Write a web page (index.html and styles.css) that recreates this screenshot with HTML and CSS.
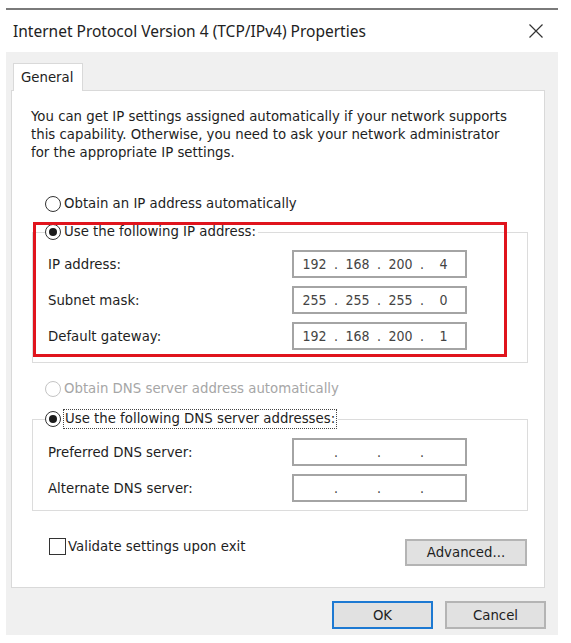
FILE: index.html
```html
<!DOCTYPE html>
<html>
  <head>
    <title>Internet Protocol Version 4 (TCP/IPv4) Properties</title>
    <link rel="stylesheet" href="styles.css">
  </head>
  <body>
    <div class="peek"></div>
    <div class="window">
      <div class="titlebar">
        <span class="title">Internet Protocol Version 4 (TCP/IPv4) Properties</span>
        <svg class="close" width="16" height="16" viewBox="0 0 16 16">
          <path d="M1.5 1.5L14.5 14.5M14.5 1.5L1.5 14.5"/>
        </svg>
      </div>

      <div class="frame">
        <div class="tabs">
          <div class="tab">General</div>
        </div>

        <div class="panel">
          <p class="intro">You can get IP settings assigned automatically if your network supports<br>this capability. Otherwise, you need to ask your network administrator<br>for the appropriate IP settings.</p>

          <div class="choice first"><span class="radio"></span>Obtain an IP address automatically</div>

          <fieldset class="group ip-group">
            <legend class="choice"><span class="radio on"></span>Use the following IP address:</legend>
            <div class="field">
              <span class="label">IP address:</span>
              <div class="ipbox">
                <span class="seg">192</span><span class="dot">.</span><span class="seg">168</span><span class="dot">.</span><span class="seg">200</span><span class="dot">.</span><span class="seg">4</span>
              </div>
            </div>
            <div class="field">
              <span class="label">Subnet mask:</span>
              <div class="ipbox">
                <span class="seg">255</span><span class="dot">.</span><span class="seg">255</span><span class="dot">.</span><span class="seg">255</span><span class="dot">.</span><span class="seg">0</span>
              </div>
            </div>
            <div class="field">
              <span class="label">Default gateway:</span>
              <div class="ipbox">
                <span class="seg">192</span><span class="dot">.</span><span class="seg">168</span><span class="dot">.</span><span class="seg">200</span><span class="dot">.</span><span class="seg">1</span>
              </div>
            </div>
          </fieldset>

          <div class="choice disabled"><span class="radio"></span>Obtain DNS server address automatically</div>

          <fieldset class="group dns-group">
            <legend class="choice"><span class="radio on"></span><span class="focus">Use the following DNS server addresses:</span></legend>
            <div class="field">
              <span class="label">Preferred DNS server:</span>
              <div class="ipbox">
                <span class="seg"></span><span class="dot">.</span><span class="seg"></span><span class="dot">.</span><span class="seg"></span><span class="dot">.</span><span class="seg"></span>
              </div>
            </div>
            <div class="field">
              <span class="label">Alternate DNS server:</span>
              <div class="ipbox">
                <span class="seg"></span><span class="dot">.</span><span class="seg"></span><span class="dot">.</span><span class="seg"></span><span class="dot">.</span><span class="seg"></span>
              </div>
            </div>
          </fieldset>

          <div class="bottom-row">
            <div class="check"><span class="box"></span>Validate settings upon exit</div>
            <button class="btn advanced">Advanced...</button>
          </div>

          <div class="highlight"></div>
        </div>

        <div class="footer">
          <button class="btn ok">OK</button>
          <button class="btn">Cancel</button>
        </div>
      </div>
    </div>
  </body>
</html>
```

FILE: styles.css
```css
* {
  box-sizing: border-box;
}

body, html {
  margin: 0;
  padding: 0;
  background-color: #fff;
}

body {
  font-family: 'DejaVu Sans', sans-serif;
  font-size: 13.3px;
  color: #1e1e1e;
}

.peek {
  height: 8px;
}

.window {
  width: 552px;
  margin-left: 6px;
  border-top: 2px solid #7a7a7a;
}

.titlebar {
  height: 42px;
  display: flex;
  align-items: center;
  justify-content: space-between;
  padding: 0 14px 0 7px;
  background-color: #fff;
}

.title {
  font-family: 'Noto Sans', sans-serif;
  font-size: 15.5px;
  color: #222;
}

.close path {
  stroke: #333;
  stroke-width: 1.2;
  fill: none;
}

.frame {
  height: 583px;
  background-color: #f0f0f0;
  padding: 11px 12px 0 5px;
}

.tabs {
  display: flex;
  padding-left: 2px;
}

.tab {
  position: relative;
  z-index: 1;
  width: 70px;
  height: 28px;
  margin-bottom: -1px;
  padding: 6px 0 0 7px;
  background-color: #fff;
  border: 1px solid #d9d9d9;
  border-bottom: none;
  color: #222;
}

.panel {
  position: relative;
  width: 534px;
  height: 498px;
  background-color: #fff;
  border: 1px solid #d9d9d9;
}

.intro {
  margin: 17px 0 0 19px;
  line-height: 18px;
}

.choice {
  display: flex;
  align-items: center;
  height: 18px;
  line-height: 18px;
  white-space: nowrap;
}

.choice.first {
  margin: 33px 0 0 33px;
}

.choice.disabled {
  margin: 17px 0 0 33px;
  color: #a6a6a6;
}

.radio {
  width: 16px;
  height: 16px;
  margin-right: 3px;
  border: 1px solid #333;
  border-radius: 50%;
  background-color: #fff;
  display: flex;
  align-items: center;
  justify-content: center;
}

.radio.on::after {
  content: "";
  width: 8px;
  height: 8px;
  border-radius: 50%;
  background-color: #1a1a1a;
}

.disabled .radio {
  border-color: #c4c4c4;
}

.group {
  width: 496px;
  margin: 0 0 0 20px;
  padding: 0 0 0 15px;
  border: 1px solid #dcdcdc;
  min-width: 0;
}

.group legend {
  padding: 0 2px 0 0;
  margin-left: -3px;
}

.ip-group {
  margin-top: 10px;
  padding-bottom: 12px;
}

.ip-group .field:first-of-type {
  margin-top: 9px;
}

.dns-group {
  margin-top: 12px;
  padding-bottom: 8px;
}

.dns-group .field:first-of-type {
  margin-top: 10px;
}

.focus {
  outline: 1px dotted #444;
  outline-offset: 0;
  padding: 0 1px;
}

.field {
  display: flex;
  align-items: center;
  height: 28px;
  margin-top: 8px;
}

.label {
  width: 244px;
}

.ipbox {
  width: 175px;
  height: 28px;
  display: flex;
  align-items: center;
  padding: 0 2px;
  border: 2px solid #a4a4a4;
  background-color: #fff;
  color: #444;
  font-family: 'DejaVu Sans Condensed', 'DejaVu Sans', sans-serif;
  font-size: 14px;
}

.seg {
  width: 37px;
  text-align: center;
}

.dot {
  width: 6px;
  text-align: center;
}

.bottom-row {
  display: flex;
  align-items: flex-start;
  margin-top: 26px;
  padding: 0 17px 0 37px;
}

.check {
  display: flex;
  align-items: center;
  height: 18px;
}

.check .box {
  width: 17px;
  height: 17px;
  margin-right: 2px;
  border: 1px solid #333;
  background-color: #fff;
}

.btn {
  height: 28px;
  font-family: 'DejaVu Sans', sans-serif;
  font-size: 13.3px;
  color: #1e1e1e;
  background-color: #e1e1e1;
  border: 2px solid #b4b4b4;
  padding: 0;
}

.advanced {
  width: 122px;
  height: 27px;
  margin: 2px 0 0 auto;
}

.footer {
  display: flex;
  justify-content: flex-end;
  gap: 12px;
  margin-top: 13px;
}

.footer .btn {
  width: 101px;
}

.btn.ok {
  border-color: #1d79d2;
}

/* annotation drawn over the static IP block */
.highlight {
  position: absolute;
  left: 21px;
  top: 131px;
  width: 474px;
  height: 135px;
  border: 3px solid #e0141d;
}
```
